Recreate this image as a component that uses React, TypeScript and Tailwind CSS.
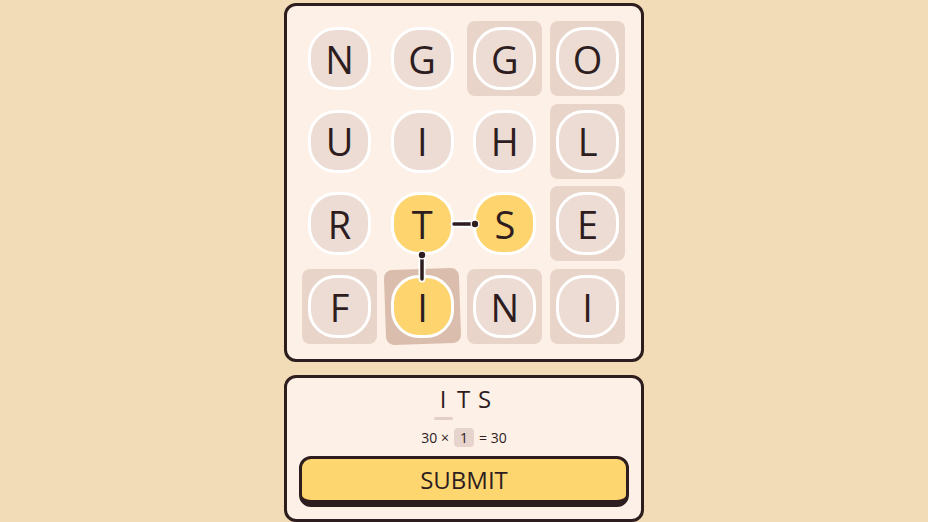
import React from "react";

type Cell = { l: string; bg?: "none" | "light" | "dark"; sel?: boolean; rot?: boolean };

const grid: Cell[][] = [
  [{ l: "N" }, { l: "G" }, { l: "G", bg: "light" }, { l: "O", bg: "light" }],
  [{ l: "U" }, { l: "I" }, { l: "H" }, { l: "L", bg: "light" }],
  [{ l: "R" }, { l: "T", sel: true }, { l: "S", sel: true }, { l: "E", bg: "light" }],
  [{ l: "F", bg: "light" }, { l: "I", bg: "dark", sel: true, rot: true }, { l: "N", bg: "light" }, { l: "I", bg: "light" }],
];

function Tile({ c }: { c: Cell }) {
  const cellBg =
    c.bg === "light" ? "bg-[#e9d4c9]" : c.bg === "dark" ? "bg-[#dabdad]" : "bg-transparent";
  return (
    <div className={`relative w-[75px] h-[75px] rounded-[8px] flex items-center justify-center ${cellBg} ${c.rot ? "rotate-[-2deg]" : ""}`}>
      <div
        className={`w-[63px] h-[63px] rounded-[28px] border-[3px] border-white flex items-center justify-center ${c.sel ? "bg-[#fdd46e]" : "bg-[#ecdcd3]"} ${c.rot ? "rotate-[2deg]" : ""}`}
      >
        <span className="text-[38px] leading-none text-[#2e1d1f] font-medium">{c.l}</span>
      </div>
    </div>
  );
}

export default function App() {
  return (
    <div
      className="w-full h-[522px] overflow-hidden bg-[#f2dbb7] flex flex-col items-center pt-[3px]"
      style={{ fontFamily: '"Open Sans", "Noto Sans", sans-serif' }}
    >
      <div className="w-[360px] border-[3px] border-[#2e1d1f] rounded-[12px] bg-[#fdf0e7] p-[15px]">
        <div className="relative grid grid-cols-[repeat(4,75px)] gap-x-[7.7px] gap-y-[7.7px]">
          {grid.flat().map((c, i) => (
            <Tile key={i} c={c} />
          ))}
          <svg className="absolute left-0 top-0 pointer-events-none" width="323" height="323" viewBox="0 0 323 323">
            <line x1="152" y1="203" x2="173" y2="203" stroke="white" strokeWidth="7" strokeLinecap="round" />
            <line x1="152" y1="203" x2="173" y2="203" stroke="#2e1d1f" strokeWidth="3.5" strokeLinecap="round" />
            <circle cx="173" cy="203" r="4.5" fill="white" />
            <circle cx="173" cy="203" r="3.2" fill="#2e1d1f" />
            <line x1="120" y1="234" x2="120" y2="258" stroke="white" strokeWidth="7" strokeLinecap="round" />
            <line x1="120" y1="234" x2="120" y2="258" stroke="#2e1d1f" strokeWidth="3.5" strokeLinecap="round" />
            <circle cx="120" cy="234" r="4.5" fill="white" />
            <circle cx="120" cy="234" r="3.2" fill="#2e1d1f" />
          </svg>
        </div>
      </div>

      <div className="mt-[13px] w-[360px] h-[160px] border-[3px] border-[#2e1d1f] rounded-[12px] bg-[#fdf0e7] px-[12px] pt-[10px] flex flex-col items-center">
        <div className="flex items-end text-[24px] leading-none text-[#2e1d1f] h-[32px]">
          <div className="relative w-[20px] flex flex-col items-center">
            <span>I</span>
            <div className="mt-[6px] w-[19px] h-[3px] rounded-full bg-[#e3cfc6]" />
          </div>
          <div className="w-[21px] flex flex-col items-center">
            <span>T</span>
            <div className="mt-[6px] h-[3px]" />
          </div>
          <div className="w-[21px] flex flex-col items-center">
            <span>S</span>
            <div className="mt-[6px] h-[3px]" />
          </div>
        </div>
        <div className="mt-[8px] flex items-center text-[14px] text-[#2e1d1f] leading-none">
          <span>30 ×</span>
          <span className="mx-[5px] w-[20px] h-[19px] rounded-[4px] bg-[#e6d3cc] flex items-center justify-center">1</span>
          <span>= 30</span>
        </div>
        <button className="mt-[9px] w-[330px] h-[51px] rounded-[12px] border-[3px] border-b-[7px] border-[#2e1d1f] bg-[#fed670] text-[24px] leading-none font-medium text-[#2e1d1f] flex items-center justify-center">
          SUBMIT
        </button>
      </div>
    </div>
  );
}
